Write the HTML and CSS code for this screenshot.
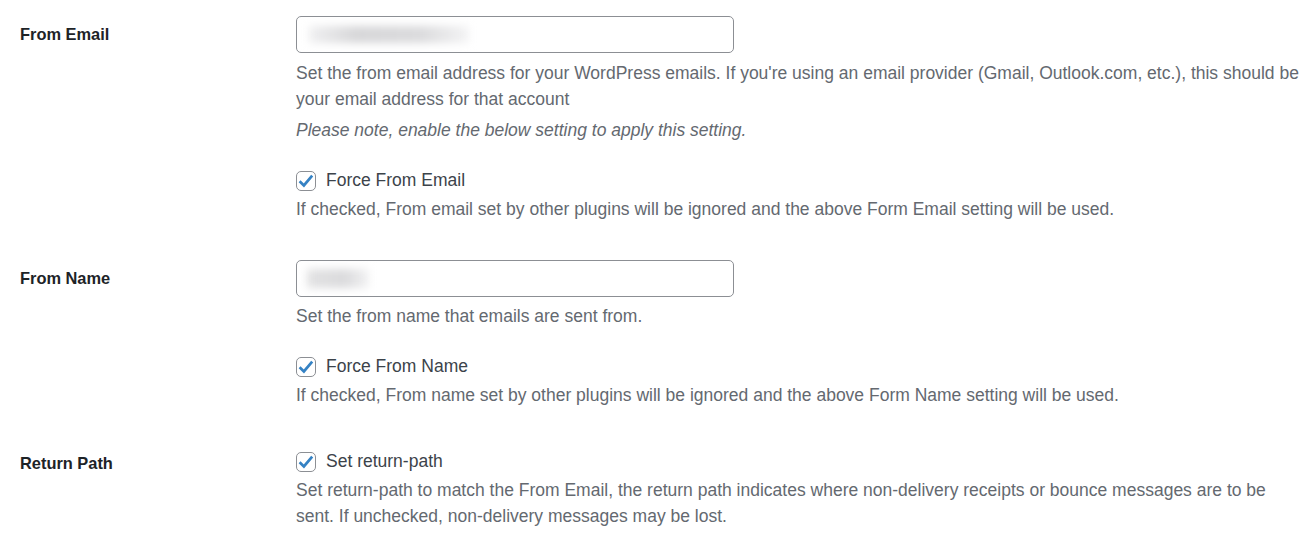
FILE: index.html
```html
<!DOCTYPE html>
<html lang="en">
<head>
<meta charset="utf-8">
<title>Mail settings</title>
<link rel="stylesheet" href="styles.css">
</head>
<body>
<div class="settings">
  <div class="row row-email">
    <div class="label">From Email</div>
    <div class="field">
      <div class="input"><span class="blur blur-email"></span></div>
      <p class="desc desc-first">Set the from email address for your WordPress emails. If you're using an email provider (Gmail, Outlook.com, etc.), this should be your email address for that account</p>
      <p class="note">Please note, enable the below setting to apply this setting.</p>
      <label class="check check-gap"><span class="box"><svg viewBox="0 0 20 20" width="20" height="20"><polyline points="3.6,10.2 7.9,14.4 16.2,4.6" fill="none" stroke="#3582c4" stroke-width="2.7"/></svg></span>Force From Email</label>
      <p class="desc desc-after">If checked, From email set by other plugins will be ignored and the above Form Email setting will be used.</p>
    </div>
  </div>
  <div class="row row-name">
    <div class="label">From Name</div>
    <div class="field">
      <div class="input"><span class="blur blur-name"></span></div>
      <p class="desc desc-first">Set the from name that emails are sent from.</p>
      <label class="check check-gap"><span class="box"><svg viewBox="0 0 20 20" width="20" height="20"><polyline points="3.6,10.2 7.9,14.4 16.2,4.6" fill="none" stroke="#3582c4" stroke-width="2.7"/></svg></span>Force From Name</label>
      <p class="desc desc-after">If checked, From name set by other plugins will be ignored and the above Form Name setting will be used.</p>
    </div>
  </div>
  <div class="row row-return">
    <div class="label">Return Path</div>
    <div class="field">
      <label class="check"><span class="box"><svg viewBox="0 0 20 20" width="20" height="20"><polyline points="3.6,10.2 7.9,14.4 16.2,4.6" fill="none" stroke="#3582c4" stroke-width="2.7"/></svg></span>Set return-path</label>
      <p class="desc desc-after">Set return-path to match the From Email, the return path indicates where non-delivery receipts or bounce messages are to be sent. If unchecked, non-delivery messages may be lost.</p>
    </div>
  </div>
</div>
</body>
</html>
```
FILE: styles.css
```css
html, body {
  margin: 0;
  padding: 0;
  background: #ffffff;
}
body {
  font-family: "Liberation Sans", Arial, sans-serif;
  font-size: 17.5px;
  color: #3c434a;
}
.settings {
  width: 1302px;
  overflow: hidden;
}
.row {
  display: grid;
  grid-template-columns: 276px 1006px;
  padding-left: 20px;
}
.row-email { height: 244px; padding-top: 16px; box-sizing: border-box; }
.row-name { height: 185px; padding-top: 16px; box-sizing: border-box; }
.row-return { padding-top: 19px; }
.label {
  font-weight: bold;
  font-size: 16.4px;
  color: #1d2327;
  line-height: 26px;
  margin-top: 5px;
}
.row-return .label { margin-top: 2px; }
.input {
  width: 438px;
  height: 37px;
  box-sizing: border-box;
  border: 1px solid #8c8f94;
  border-radius: 5px;
  background: #fff;
  position: relative;
  overflow: hidden;
}
.blur {
  position: absolute;
  display: block;
  filter: blur(4px);
}
.blur-email {
  left: 12px;
  top: 9px;
  width: 160px;
  height: 17px;
  background: linear-gradient(90deg, #f0f0f1 0%, #d6d6d8 30%, #dadadc 70%, #f4f4f5 100%);
}
.blur-name {
  left: 10px;
  top: 8px;
  width: 62px;
  height: 19px;
  background: linear-gradient(90deg, #e2e2e3 0%, #dadadc 60%, #f2f2f3 100%);
}
p { margin: 0; }
.desc {
  color: #646970;
  line-height: 26px;
}
.desc-first { margin-top: 7px; }
.row-name .desc-first { margin-top: 6px; }
.desc-after { margin-top: 3px; }
.note {
  color: #646970;
  font-style: italic;
  line-height: 26px;
  margin-top: 5px;
}
.check {
  display: flex;
  align-items: center;
  gap: 10px;
  line-height: 26px;
  color: #3c434a;
}
.check-gap { margin-top: 24px; }
.box {
  width: 20px;
  height: 20px;
  box-sizing: border-box;
  border: 1px solid #8c8f94;
  border-radius: 5px;
  display: flex;
  align-items: center;
  justify-content: center;
  flex: none;
  position: relative;
  top: 1px;
}
.box svg { display: block; flex: none; margin: -1px; }
```
